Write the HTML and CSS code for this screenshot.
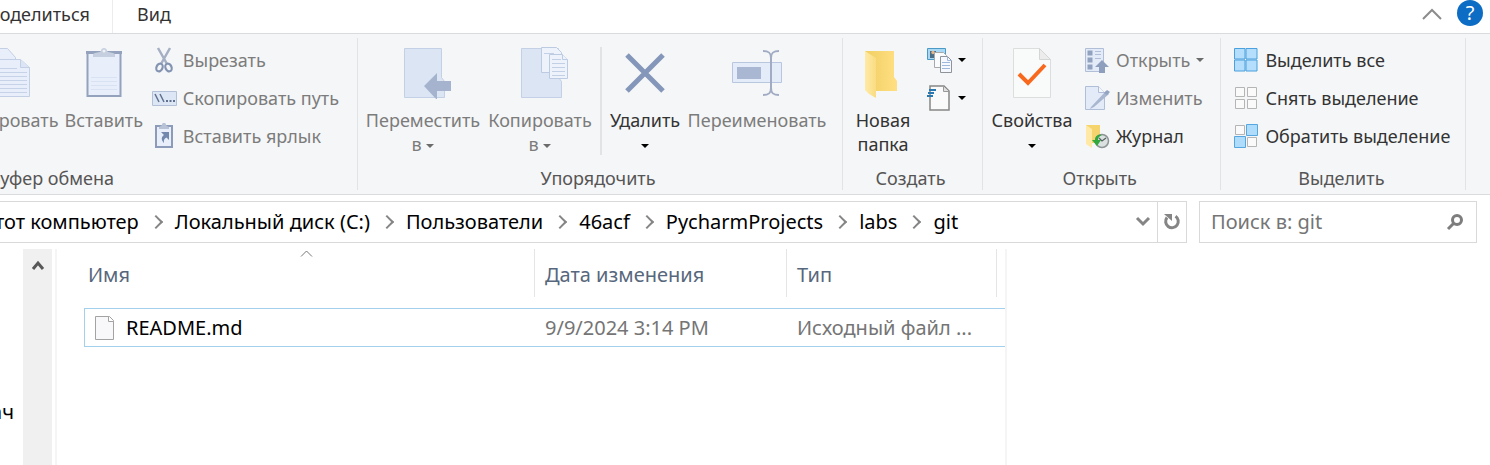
FILE: index.html
```html
<!DOCTYPE html>
<html lang="ru">
<head>
<meta charset="utf-8">
<title>git</title>
<link rel="stylesheet" href="styles.css">
</head>
<body>
<nav class="tabs">
  <button class="tab tab-share">Поделиться</button>
  <button class="tab">Вид</button>
  <div class="tabs-end">
    <button class="plain" aria-label="Свернуть ленту"><svg class="collapse" width="22" height="14" viewBox="0 0 22 14"><path d="M2 12L11 3l9 9" fill="none" stroke="#8c8c8c" stroke-width="2"/></svg></button>
    <button class="help" aria-label="Справка">?</button>
  </div>
</nav>

<div class="ribbon">
  <section class="group group-clip">
    <div class="tools">
      <button class="big off w-copy">
        <svg width="64" height="52" viewBox="0 0 64 52"><g fill="#e9effa" stroke="#c3cfe4"><path d="M10.500 1.500h22l8 9v30h-30z"/><path d="M21.500 12.500h24l9 8v29h-33z"/><path d="M45.500 12.500v8h9" fill="#dbe5f5"/></g><path d="M24 21.500h18M24 25.500h28M24 29.500h28M24 33.500h28M24 37.500h28M24 41.500h28M24 45.500h28" stroke="#c6d2e8"/></svg>
        <span>Копировать</span>
      </button>
      <button class="big off w-paste">
        <svg width="64" height="52" viewBox="0 0 64 52"><path d="M15.500 5h33v44h-33z" fill="#e8effb" stroke="#94a2be" stroke-width="2"/><path d="M19 30.500h26M19 34.500h26M19 38.500h26M19 42.500h26" stroke="#d8e2f3"/><path d="M14 4h36v3H14z" fill="#94a2be"/><path d="M21 7c2-2 7-1 8-3 0-4 6-4 6 0 1 2 6 1 8 3v3H21z" fill="#c6cfdf"/><circle cx="32" cy="4" r="1.500" fill="#eef2f8"/></svg>
        <span>Вставить</span>
      </button>
      <div class="list">
        <button class="small off"><svg width="26" height="26" viewBox="0 0 26 26"><path d="M7 1l9 16M19 1l-9 16" stroke="#a6b0c4" stroke-width="2.500"/><g fill="none" stroke="#8393b2" stroke-width="2.200"><ellipse cx="8.500" cy="20.500" rx="3" ry="4" transform="rotate(25 8.500 20.500)"/><ellipse cx="17.500" cy="20.500" rx="3" ry="4" transform="rotate(-25 17.500 20.500)"/></g></svg>Вырезать</button>
        <button class="small off"><svg width="26" height="26" viewBox="0 0 26 26"><path d="M1.500 6.500h24v14h-24z" fill="#dde6f5" stroke="#b3c0d8"/><path d="M4 9l4 8M9 9l4 8" stroke="#60708f" stroke-width="1.500"/><path d="M15 15h2v2h-2zM18.500 15h2v2h-2zM22 15h2v2h-2z" fill="#60708f"/></svg>Скопировать путь</button>
        <button class="small off"><svg width="26" height="26" viewBox="0 0 26 26"><path d="M5 3h16v21H5z" fill="#e8effb" stroke="#8b9bb9" stroke-width="2"/><path d="M8 4c1-1 3-1 3-2 0-3 4-3 4 0 0 1 2 1 3 2v2H8z" fill="#b7c2d6"/><path d="M10 9h8v8l-2.500-2.500C13 16 12.500 17 13 20c-3-3-3-6 0-8z" fill="#7288ac"/></svg>Вставить ярлык</button>
      </div>
    </div>
    <h2>Буфер обмена</h2>
  </section>

  <section class="group group-org">
    <div class="tools">
      <button class="big off w-move">
        <svg width="64" height="52" viewBox="0 0 64 52"><path d="M13.500 1.500h37v29l3 4v16h-40z" fill="#dbe5f3" stroke="#c3d0e5"/><path d="M33 39l13-13v8h14v10H46v9z" fill="#a5b3ce"/></svg>
        <span>Переместить<br>в <i class="drop"></i></span>
      </button>
      <button class="big off w-copyto">
        <svg width="64" height="52" viewBox="0 0 64 52"><path d="M13.500 1.500h37v29l3 4v16h-40z" fill="#dbe5f3" stroke="#c3d0e5"/><g fill="#edf2fb" stroke="#bccae2"><path d="M33.500.500h15l5 5v20h-20z"/><path d="M41.500 7.500h13l5 5v19h-18z"/><path d="M54.500 7.500v5h5"/></g><path d="M44 12.500h9M44 16.500h13M44 20.500h13M44 24.500h13M44 28.500h13M36 6.500h10" stroke="#c3cfe5"/></svg>
        <span>Копировать<br>в <i class="drop"></i></span>
      </button>
      <div class="sep"></div>
      <button class="big w-del">
        <svg width="64" height="52" viewBox="0 0 64 52"><path d="M14 8l36 36M50 8L14 44" stroke="#8496b9" stroke-width="5"/></svg>
        <span>Удалить<br><i class="drop"></i></span>
      </button>
      <button class="big off w-ren">
        <svg width="64" height="52" viewBox="0 0 64 52"><path d="M7.500 15.500h49v20h-49z" fill="#e4ecfa" stroke="#b9c6e0"/><path d="M12 20h24v12H12z" fill="#a9b7d2"/><path d="M38 4c6 0 8 2 8 7v30c0 5-2 7-8 7M54 4c-6 0-8 2-8 7v30c0 5 2 7 8 7" fill="none" stroke="#a1acc4" stroke-width="2"/></svg>
        <span>Переименовать</span>
      </button>
    </div>
    <h2>Упорядочить</h2>
  </section>

  <section class="group group-new">
    <div class="tools">
      <button class="big w-folder">
        <svg width="64" height="52" viewBox="0 0 64 52"><defs><linearGradient id="fold" x1="0" x2="1"><stop offset="0" stop-color="#f0cf62"/><stop offset="1" stop-color="#ffdf83"/></linearGradient><linearGradient id="flap" x1="0" x2="1"><stop offset="0" stop-color="#ffeaa6"/><stop offset="1" stop-color="#f9dc83"/></linearGradient></defs><path d="M14 4h29v26l3 4v10H20z" fill="url(#fold)"/><path d="M14 4l11 7v40l-7-4-4-4z" fill="url(#flap)"/></svg>
        <span>Новая<br>папка</span>
      </button>
      <div class="list">
        <button class="small" aria-label="Создать элемент"><svg width="26" height="26" viewBox="0 0 26 26"><path d="M1.500 1.500h18v11h-18z" fill="#a9d8f4" stroke="#4b9ac6"/><path d="M4 4h6v7H4z" fill="#4b6d86"/><circle cx="7" cy="5.500" r="1.700" fill="#e2b58a"/><path d="M8.500 5.500h9l3 3v12h-12z" fill="#fafbfc" stroke="#a7a9ab"/><path d="M14.500 9.500h7l4 4v12h-11z" fill="#f5f8fe" stroke="#8f949b"/><path d="M21.500 9.500v4h4M16 15.500h8M16 18.500h8M16 21.500h8" stroke="#9fb7da" fill="none"/></svg><i class="drop"></i></button>
        <button class="small" aria-label="Простой доступ"><svg width="26" height="26" viewBox="0 0 26 26"><path d="M4 1h14l5 5v19H4z" fill="#fafafa" stroke="#868686" stroke-width="1.500"/><path d="M17.500 1.500v5H23" fill="#e0e0e0" stroke="#999"/><path d="M3 5h7M2 8h6M1 11h6" stroke="#2b78b0" stroke-width="1.800"/></svg><i class="drop"></i></button>
      </div>
    </div>
    <h2>Создать</h2>
  </section>

  <section class="group group-open">
    <div class="tools">
      <button class="big w-prop">
        <svg width="64" height="52" viewBox="0 0 64 52"><path d="M13.500 1.500h26l11 11v38h-37z" fill="#f9fafa" stroke="#dcdddd"/><path d="M39.500 1.500v11h11z" fill="#ececec" stroke="#d4d5d5"/><path d="M19 27l9 9 17-18" fill="none" stroke="#f8691d" stroke-width="4"/></svg>
        <span>Свойства<br><i class="drop"></i></span>
      </button>
      <div class="list">
        <button class="small off"><svg width="26" height="26" viewBox="0 0 26 26"><path d="M1.500 1.500h18v23h-18z" fill="#e3ebf8" stroke="#b0bed8"/><path d="M3.500 3.500h5v5h-5zM3.500 10.500h5v5h-5zM3.500 17.500h5v5h-5z" fill="#91a2c0"/><path d="M11 4.500h6M11 7.500h6M11 11.500h6" stroke="#b0bed8"/><path d="M18 13l7 7h-4v6h-6v-6h-4z" fill="#8d9fbd"/></svg>Открыть<i class="drop"></i></button>
        <button class="small off"><svg width="26" height="26" viewBox="0 0 26 26"><path d="M1.500 1.500h13l6 6v17h-19z" fill="#e3ebf8" stroke="#b0bed8"/><path d="M14.500 1.500v6h6" fill="#f4f7fc" stroke="#b0bed8"/><path d="M7 22L22 6l3 3L10 22l-4 2z" fill="#a8b6d0"/><path d="M20 8l3-3 3 2-3 3z" fill="#94a4c0"/></svg>Изменить</button>
        <button class="small"><svg width="26" height="26" viewBox="0 0 26 26"><path d="M2 2h14v18H4z" fill="#f5d36d"/><path d="M2 2l6 4v19l-6-4z" fill="#ffe9a4"/><circle cx="18" cy="18" r="6.500" fill="#dbe0e0" stroke="#8d9494" stroke-width="1.500"/><path d="M15 15l3 3 4-3" fill="none" stroke="#586161" stroke-width="1.300"/><path d="M18 12c-5-1-7 2-7 5H8l5 6 4-6h-3c0-2 1-4 4-5z" fill="#31a83e"/></svg>Журнал</button>
      </div>
    </div>
    <h2>Открыть</h2>
  </section>

  <section class="group group-select">
    <div class="tools">
      <div class="list">
        <button class="small"><svg width="26" height="26" viewBox="0 0 26 26"><path d="M1.500 1.500h10.500v10.500H1.500zM13 1.500h11v10.500H13zM1.500 13H12v11H1.500zM13 13h11v11H13z" fill="#b4defb" stroke="#4ba0de"/></svg>Выделить все</button>
        <button class="small"><svg width="26" height="26" viewBox="0 0 26 26"><path d="M2.500 2.500h9v9h-9zM14.500 2.500h9v9h-9zM2.500 14.500h9v9h-9zM14.500 14.500h9v9h-9z" fill="#fafafa" stroke="#b5b5b5"/></svg>Снять выделение</button>
        <button class="small"><svg width="26" height="26" viewBox="0 0 26 26"><path d="M2.500 2.500h9v9h-9zM14.500 14.500h9v9h-9z" fill="#fafafa" stroke="#b5b5b5"/><path d="M13.500 1.500h11v11h-11zM1.500 13.500h11v11h-11z" fill="#b0dcfb" stroke="#56a7e0"/></svg>Обратить выделение</button>
      </div>
    </div>
    <h2>Выделить</h2>
  </section>
</div>

<div class="location">
  <div class="address">
    <ol class="crumbs">
      <li><a href="#">Этот компьютер</a></li>
      <li><a href="#">Локальный диск (C:)</a></li>
      <li><a href="#">Пользователи</a></li>
      <li><a href="#">46acf</a></li>
      <li><a href="#">PycharmProjects</a></li>
      <li><a href="#">labs</a></li>
      <li><a href="#">git</a></li>
    </ol>
    <button class="plain history" aria-label="Предыдущие расположения"><svg width="16" height="12" viewBox="0 0 16 12"><path d="M2 2l6 6 6-6" fill="none" stroke="#858585" stroke-width="3"/></svg></button>
    <button class="plain refresh" aria-label="Обновить"><svg width="18" height="20" viewBox="0 0 18 20"><path d="M12.500 4.200A6.300 6.300 0 1 1 4 5.500" fill="none" stroke="#858585" stroke-width="3"/><path d="M1 2h8v7z" fill="#858585"/></svg></button>
  </div>
  <label class="search">
    <input type="search" placeholder="Поиск в: git" aria-label="Поиск в: git">
    <svg width="18" height="18" viewBox="0 0 18 18"><circle cx="11" cy="7" r="4.500" fill="none" stroke="#7d7d7d" stroke-width="3"/><path d="M8 10l-6 6" stroke="#7d7d7d" stroke-width="3"/></svg>
  </label>
</div>

<main class="content">
  <aside class="tree"><a href="#">ач</a></aside>
  <div class="scroll"><button class="plain" aria-label="Прокрутить вверх"><svg width="14" height="12" viewBox="0 0 14 12"><path d="M2 10l5-6 5 6" fill="none" stroke="#585858" stroke-width="3"/></svg></button></div>
  <div class="files">
    <table>
      <thead>
        <tr>
          <th class="c-name"><div>Имя<svg class="sort" width="13" height="7" viewBox="0 0 13 7"><path d="M1 6.500l5.500-5.500L12 6.500" fill="none" stroke="#777"/></svg></div></th>
          <th class="c-date"><div>Дата изменения</div></th>
          <th class="c-type"><div>Тип</div></th>
        </tr>
      </thead>
      <tbody>
        <tr>
          <td class="name"><div><svg width="20" height="26" viewBox="0 0 20 26"><path d="M.500 1.500h14l4 4v19H.500z" fill="#f8f8fa" stroke="#a3a3a3"/><path d="M13.500 1.500v5h5" fill="#fff" stroke="#a3a3a3"/></svg>README.md</div></td>
          <td>9/9/2024 3:14 PM</td>
          <td>Исходный файл ...</td>
        </tr>
      </tbody>
    </table>
  </div>
</main>
</body>
</html>
```
FILE: styles.css
```css
* { box-sizing: border-box; }

body {
  margin: 0;
  height: 100vh;
  display: flex;
  flex-direction: column;
  overflow: hidden;
  background: #fff;
  color: #000;
  font: 18px/26px "Noto Sans", "Open Sans", sans-serif;
}

button {
  border: 0;
  padding: 0;
  background: none;
  color: inherit;
  font: inherit;
}

a { color: inherit; text-decoration: none; }
svg { display: block; flex: none; }
.plain { display: flex; align-items: center; justify-content: center; }

.tabs {
  display: flex;
  height: 34px;
  border-bottom: 1px solid #dadbdc;
  color: #333;
}
.tab { padding: 0 24px 6px; }
.tab-share {
  display: flex;
  justify-content: flex-end;
  align-items: center;
  width: 113px;
  padding: 0 22px 6px 0;
  border-right: 1px solid #ececec;
}
.tabs-end {
  display: flex;
  gap: 14px;
  margin-left: auto;
  padding-right: 7px;
}
.tabs-end .plain { height: 28px; }
.help {
  width: 26px;
  height: 26px;
  border-radius: 50%;
  background: #0d6cc4;
  color: #fff;
  font-size: 20px;
}

.ribbon {
  display: flex;
  padding: 4px 0;
  background: #f5f6f7;
  border-bottom: 1px solid #dadbdc;
  color: #333;
}
.group {
  display: flex;
  flex-direction: column;
  flex: none;
  height: 152px;
  border-right: 1px solid #e2e3e4;
}
.group h2 {
  margin: auto 0 0;
  padding-right: 4px;
  color: #555;
  font-size: 18px;
  font-weight: 400;
  line-height: 24px;
  text-align: center;
}
.tools { display: flex; padding: 9px 0 0 7px; }
.group-clip { width: 358px; overflow: hidden; }
.group-clip .tools { justify-content: flex-end; padding-right: 18px; }
.group-clip h2 { padding-right: 243px; text-align: right; white-space: nowrap; direction: rtl; }
.group-org .tools { padding-left: 4px; padding-right: 12px; }
.group-new .tools { padding-right: 16px; }
.group-open .tools { padding-right: 16px; }
.group-select .tools { padding-left: 12px; padding-right: 15px; }

.big {
  display: flex;
  flex: none;
  flex-direction: column;
  align-items: center;
  gap: 9px;
  line-height: 24px;
  white-space: nowrap;
}
.off { color: #7c7c7c; }
.w-copy { width: 108px; }
.w-paste { width: 86px; }
.w-move { width: 122px; }
.w-copyto { width: 112px; }
.w-del { width: 78px; }
.w-ren { width: 146px; }
.w-folder { width: 66px; }
.w-prop { width: 84px; }
.sep { width: 2px; height: 108px; margin: 0 4px; background: #e2e3e4; }

.list { display: flex; flex-direction: column; gap: 12px; margin-left: 10px; }
.group-clip .list { width: 208px; margin-left: 4px; }
.group-select .list { margin-left: 0; }
.small {
  display: flex;
  align-items: center;
  gap: 6px;
  height: 26px;
  white-space: nowrap;
}
.drop {
  display: inline-block;
  border: 4px solid transparent;
  border-top-color: #000;
  border-bottom: 0;
  vertical-align: middle;
}
.off .drop { border-top-color: #6b6b6b; }

.location {
  display: flex;
  gap: 12px;
  padding: 6px 13px 6px 0;
  font-size: 20px;
}
.address, .search {
  display: flex;
  height: 42px;
  border: 1px solid #d9d9d9;
}
.address { flex: 1; border-left: 0; overflow: hidden; }
.crumbs {
  display: flex;
  flex: 1;
  align-items: center;
  margin: 0 0 0 -18px;
  padding: 0;
  list-style: none;
  white-space: nowrap;
}
.crumbs li { display: flex; align-items: center; }
.crumbs li + li::before {
  content: "";
  width: 8px;
  height: 8px;
  margin: 0 14px 0 12px;
  border: solid #858585;
  border-width: 2px 2px 0 0;
  transform: rotate(45deg);
}
.history { width: 28px; }
.refresh { width: 29px; border-left: 1px solid #d9d9d9; }
.search { align-items: center; width: 278px; padding: 0 12px 0 11px; }
.search input {
  flex: 1;
  min-width: 0;
  padding: 0;
  border: 0;
  outline: 0;
  background: none;
  font: inherit;
}
.search input::placeholder { color: #757575; opacity: 1; }

.content { display: flex; flex: 1; min-height: 0; font-size: 20px; }
.tree {
  display: flex;
  justify-content: flex-end;
  width: 23px;
  padding: 150px 9px 0 0;
  overflow: hidden;
}
.scroll { width: 29px; background: #f0f0f0; }
.scroll .plain { width: 100%; height: 32px; }
.files {
  margin-left: 3px;
  padding-left: 27px;
  border: solid #f5f5f5;
  border-width: 0 2px;
}
table { border-collapse: separate; border-spacing: 0; table-layout: fixed; width: 921px; }
th { padding: 0 0 11px; font-weight: 400; text-align: left; color: #57677c; }
th div {
  position: relative;
  height: 48px;
  padding: 13px 0 0 10px;
  border-right: 1px solid #e5e5e5;
}
.c-name { width: 451px; }
.c-name div { padding-left: 4px; }
.c-date { width: 252px; }
.c-type div { margin-right: 8px; }
.sort { position: absolute; top: 1px; left: 50%; margin-left: -9px; }
td {
  height: 39px;
  padding: 0 0 0 10px;
  border: solid #a3d0ec;
  border-width: 1px 0;
  color: #757575;
}
td.name { border-left-width: 1px; color: #000; }
td.name div { display: flex; align-items: center; gap: 11px; }
```
